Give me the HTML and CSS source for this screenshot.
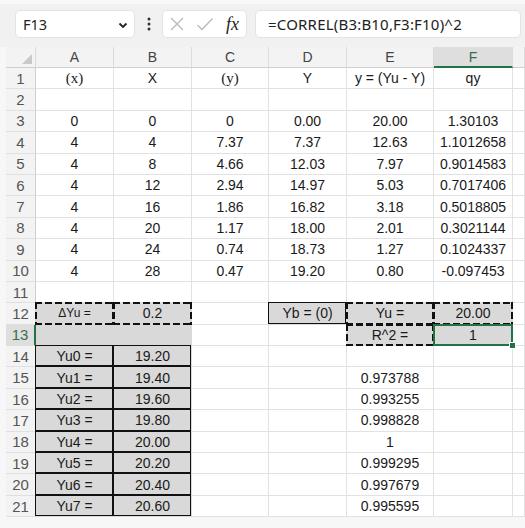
FILE: index.html
```html
<!DOCTYPE html>
<html>
<head>
<meta charset="utf-8">
<link rel="stylesheet" href="styles.css">
</head>
<body>
<div class="toolbar">
  <div class="namebox">
    <span class="nb-text">F13</span>
    <svg class="chev" width="10" height="7" viewBox="0 0 10 7"><polyline points="1.5,1.5 5,5 8.5,1.5" fill="none" stroke="#222" stroke-width="1.8"/></svg>
  </div>
  <div class="dots">
    <svg width="4" height="14" viewBox="0 0 4 14"><circle cx="2" cy="2" r="1.5" fill="#333"/><circle cx="2" cy="7" r="1.5" fill="#333"/><circle cx="2" cy="12" r="1.5" fill="#333"/></svg>
  </div>
  <div class="fbtns">
    <svg class="ico" width="16" height="16" viewBox="0 0 16 16"><path d="M2 2 L14 14 M14 2 L2 14" stroke="#b9b9b9" stroke-width="1.3" fill="none"/></svg>
    <svg class="ico" width="18" height="16" viewBox="0 0 18 16"><path d="M1.5 9 L6 13.5 L16.5 2.5" stroke="#b9b9b9" stroke-width="1.3" fill="none"/></svg>
    <span class="fx">fx</span>
  </div>
  <div class="formula">=CORREL(B3:B10,F3:F10)^2</div>
</div>

<div class="sheet">
  <div class="row hdr">
    <div class="corner"><svg width="10" height="10" viewBox="0 0 10 10"><polygon points="10,0 10,10 0,10" fill="#c9c9c9"/></svg></div>
    <div class="ch">A</div><div class="ch">B</div><div class="ch">C</div><div class="ch">D</div><div class="ch">E</div><div class="ch sel-h">F</div><div class="ch"></div>
  </div>
  <div class="row">
    <div class="rh">1</div><div class="c serif">(x)</div><div class="c">X</div><div class="c serif">(y)</div><div class="c">Y</div><div class="c">y = (Yu - Y)</div><div class="c">qy</div><div class="c"></div>
  </div>
  <div class="row">
    <div class="rh">2</div><div class="c"></div><div class="c"></div><div class="c"></div><div class="c"></div><div class="c"></div><div class="c"></div><div class="c"></div>
  </div>
  <div class="row">
    <div class="rh">3</div><div class="c">0</div><div class="c">0</div><div class="c">0</div><div class="c">0.00</div><div class="c">20.00</div><div class="c">1.30103</div><div class="c"></div>
  </div>
  <div class="row">
    <div class="rh">4</div><div class="c">4</div><div class="c">4</div><div class="c">7.37</div><div class="c">7.37</div><div class="c">12.63</div><div class="c">1.1012658</div><div class="c"></div>
  </div>
  <div class="row">
    <div class="rh">5</div><div class="c">4</div><div class="c">8</div><div class="c">4.66</div><div class="c">12.03</div><div class="c">7.97</div><div class="c">0.9014583</div><div class="c"></div>
  </div>
  <div class="row">
    <div class="rh">6</div><div class="c">4</div><div class="c">12</div><div class="c">2.94</div><div class="c">14.97</div><div class="c">5.03</div><div class="c">0.7017406</div><div class="c"></div>
  </div>
  <div class="row">
    <div class="rh">7</div><div class="c">4</div><div class="c">16</div><div class="c">1.86</div><div class="c">16.82</div><div class="c">3.18</div><div class="c">0.5018805</div><div class="c"></div>
  </div>
  <div class="row">
    <div class="rh">8</div><div class="c">4</div><div class="c">20</div><div class="c">1.17</div><div class="c">18.00</div><div class="c">2.01</div><div class="c">0.3021144</div><div class="c"></div>
  </div>
  <div class="row">
    <div class="rh">9</div><div class="c">4</div><div class="c">24</div><div class="c">0.74</div><div class="c">18.73</div><div class="c">1.27</div><div class="c">0.1024337</div><div class="c"></div>
  </div>
  <div class="row">
    <div class="rh">10</div><div class="c">4</div><div class="c">28</div><div class="c">0.47</div><div class="c">19.20</div><div class="c">0.80</div><div class="c">-0.097453</div><div class="c"></div>
  </div>
  <div class="row">
    <div class="rh">11</div><div class="c"></div><div class="c"></div><div class="c"></div><div class="c"></div><div class="c"></div><div class="c"></div><div class="c"></div>
  </div>
  <div class="row">
    <div class="rh">12</div><div class="c g dsh small">ΔYu =</div><div class="c g dsh">0.2</div><div class="c"></div><div class="c g bk">Yb = (0)</div><div class="c g dsh">Yu =</div><div class="c g dsh">20.00</div><div class="c"></div>
  </div>
  <div class="row">
    <div class="rh sel-r">13</div><div class="c g"></div><div class="c g"></div><div class="c"></div><div class="c"></div><div class="c g dsh">R^2 =</div><div class="c g sel">1<span class="handle"></span></div><div class="c"></div>
  </div>
  <div class="row">
    <div class="rh">14</div><div class="c g bk">Yu0 =</div><div class="c g bk">19.20</div><div class="c"></div><div class="c"></div><div class="c"></div><div class="c"></div><div class="c"></div>
  </div>
  <div class="row">
    <div class="rh">15</div><div class="c g bk">Yu1 =</div><div class="c g bk">19.40</div><div class="c"></div><div class="c"></div><div class="c">0.973788</div><div class="c"></div><div class="c"></div>
  </div>
  <div class="row">
    <div class="rh">16</div><div class="c g bk">Yu2 =</div><div class="c g bk">19.60</div><div class="c"></div><div class="c"></div><div class="c">0.993255</div><div class="c"></div><div class="c"></div>
  </div>
  <div class="row">
    <div class="rh">17</div><div class="c g bk">Yu3 =</div><div class="c g bk">19.80</div><div class="c"></div><div class="c"></div><div class="c">0.998828</div><div class="c"></div><div class="c"></div>
  </div>
  <div class="row">
    <div class="rh">18</div><div class="c g bk">Yu4 =</div><div class="c g bk">20.00</div><div class="c"></div><div class="c"></div><div class="c">1</div><div class="c"></div><div class="c"></div>
  </div>
  <div class="row">
    <div class="rh">19</div><div class="c g bk">Yu5 =</div><div class="c g bk">20.20</div><div class="c"></div><div class="c"></div><div class="c">0.999295</div><div class="c"></div><div class="c"></div>
  </div>
  <div class="row">
    <div class="rh">20</div><div class="c g bk">Yu6 =</div><div class="c g bk">20.40</div><div class="c"></div><div class="c"></div><div class="c">0.997679</div><div class="c"></div><div class="c"></div>
  </div>
  <div class="row">
    <div class="rh">21</div><div class="c g bk">Yu7 =</div><div class="c g bk">20.60</div><div class="c"></div><div class="c"></div><div class="c">0.995595</div><div class="c"></div><div class="c"></div>
  </div>
</div>
</body>
</html>
```

FILE: styles.css
```css
* {
  box-sizing: border-box;
  margin: 0;
  padding: 0;
}

body {
  width: 525px;
  height: 528px;
  overflow: hidden;
  background: #f7f7f7;
  font-family: "Liberation Sans", Arial, sans-serif;
  color: #1a1a1a;
}

.toolbar {
  height: 47px;
  display: flex;
  align-items: flex-start;
  padding: 6px 0 0 15px;
  background: #f1f1f1;
  border-top: 4px solid #f8f8f8;
}

.namebox {
  width: 120px;
  height: 28px;
  background: #fff;
  border: 1px solid #e3e3e3;
  border-radius: 5px;
  display: flex;
  align-items: center;
  justify-content: space-between;
  padding: 0 6px 0 7px;
}

.nb-text {
  font-family: "Noto Sans", "Open Sans", sans-serif;
  font-size: 14.5px;
  color: #222;
}

.chev {
  margin-top: 2px;
}

.dots {
  width: 27px;
  height: 28px;
  display: flex;
  align-items: center;
  justify-content: center;
}

.fbtns {
  width: 85px;
  height: 28px;
  background: #fff;
  border: 1px solid #e3e3e3;
  border-radius: 5px;
  display: flex;
  align-items: center;
  padding-left: 6px;
  gap: 11px;
}

.fx {
  font-family: "Liberation Serif", "Times New Roman", serif;
  font-style: italic;
  font-size: 18px;
  color: #222;
  margin-left: 1px;
}

.formula {
  flex: 1;
  height: 28px;
  margin-left: 8px;
  margin-right: 4px;
  background: #fff;
  border: 1px solid #e3e3e3;
  border-radius: 5px;
  padding-left: 12px;
  display: flex;
  align-items: center;
  font-family: "Noto Sans", "Open Sans", sans-serif;
  font-size: 15px;
  letter-spacing: 0.2px;
  color: #222;
}

.sheet {
  padding-left: 6px;
  background: #f7f7f7;
  overflow: hidden;
}

.row {
  display: grid;
  grid-template-columns: 30px 78px 78px 77px 78px 87px 79px 12px;
  height: 21.4px;
  background: #fff;
}

.row.hdr {
  height: 21px;
  background: #f3f3f3;
}

.corner {
  display: flex;
  align-items: flex-end;
  justify-content: flex-end;
  padding: 0 3px 3px 0;
  border-right: 1px solid #dadada;
  border-bottom: 1px solid #cfcfcf;
  background: #f3f3f3;
}

.ch {
  display: flex;
  align-items: center;
  justify-content: center;
  font-size: 14px;
  color: #444;
  border-right: 1px solid #dcdcdc;
  border-bottom: 1px solid #cfcfcf;
}

.ch.sel-h {
  background: #dedede;
  color: #3c6b4f;
  border-bottom: 2px solid #217346;
}

.rh {
  display: flex;
  align-items: center;
  justify-content: center;
  font-size: 15px;
  color: #555;
  background: #f3f3f3;
  border-right: 1px solid #cfcfcf;
  border-bottom: 1px solid #e0e0e0;
}

.rh.sel-r {
  background: #dedede;
  color: #3c6b4f;
  border-right: 2px solid #217346;
}

.c {
  position: relative;
  display: flex;
  align-items: center;
  justify-content: center;
  font-size: 14px;
  white-space: nowrap;
  border-right: 1px solid #e2e2e2;
  border-bottom: 1px solid #e2e2e2;
}

.c.serif {
  font-family: "Liberation Serif", "Times New Roman", serif;
  font-size: 15px;
}

.c.small {
  font-size: 12px;
}

.c.g {
  background: #d9d9d9;
  border-color: #d9d9d9;
}

.c.bk::after {
  content: "";
  position: absolute;
  top: -1px;
  left: -1px;
  right: 0;
  bottom: 0;
  border: 1px solid #111;
  pointer-events: none;
  z-index: 1;
}

.c.dsh::after {
  content: "";
  position: absolute;
  top: -1px;
  left: -1px;
  right: -1px;
  bottom: -1px;
  pointer-events: none;
  z-index: 2;
  background:
    repeating-linear-gradient(90deg, #111 0 7px, transparent 7px 10px) top left / 100% 2px no-repeat,
    repeating-linear-gradient(90deg, #111 0 7px, transparent 7px 10px) bottom left / 100% 2px no-repeat,
    repeating-linear-gradient(180deg, #111 0 7px, transparent 7px 10px) top left / 2px 100% no-repeat,
    repeating-linear-gradient(180deg, #111 0 7px, transparent 7px 10px) top right / 2px 100% no-repeat;
}

.c.sel::after {
  content: "";
  position: absolute;
  top: -1px;
  left: -1px;
  right: -1px;
  bottom: -1px;
  border: 2px solid #217346;
  pointer-events: none;
  z-index: 3;
}

.handle {
  position: absolute;
  right: -4px;
  bottom: -4px;
  width: 7px;
  height: 7px;
  background: #217346;
  border: 1px solid #fff;
  z-index: 4;
}
```
